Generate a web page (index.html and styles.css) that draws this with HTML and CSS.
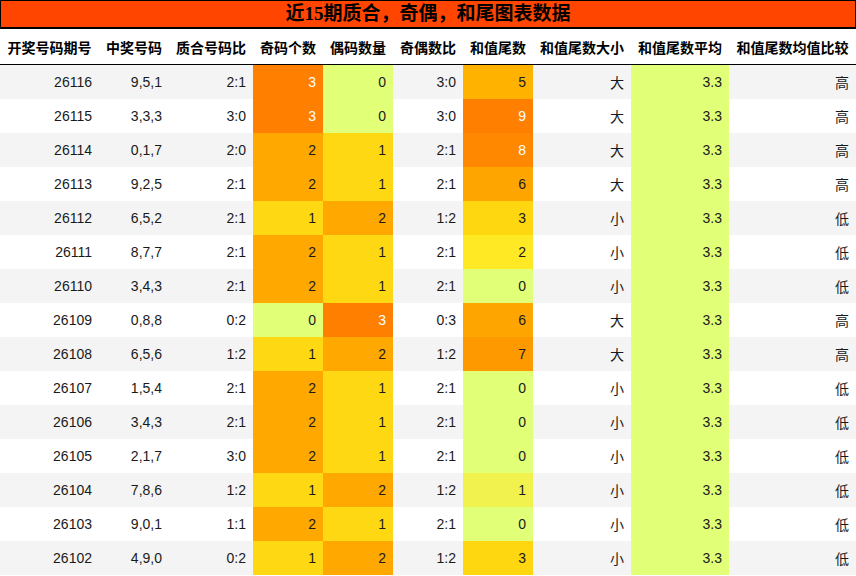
FILE: index.html
```html
<!DOCTYPE html>
<html lang="zh">
<head>
<meta charset="utf-8">
<title>近15期质合，奇偶，和尾图表数据</title>
<link rel="stylesheet" href="styles.css">
</head>
<body>
<div class="title">近15期质合，奇偶，和尾图表数据</div>
<table class="grid">
  <colgroup>
    <col class="w99"><col class="w70"><col class="w84"><col class="w70"><col class="w70"><col class="w70"><col class="w70"><col class="w98"><col class="w98"><col class="w127">
  </colgroup>
  <thead>
    <tr><th>开奖号码期号</th><th>中奖号码</th><th>质合号码比</th><th>奇码个数</th><th>偶码数量</th><th>奇偶数比</th><th>和值尾数</th><th>和值尾数大小</th><th>和值尾数平均</th><th>和值尾数均值比较</th></tr>
  </thead>
  <tbody>
    <tr><td>26116</td><td>9,5,1</td><td>2:1</td><td class="c3">3</td><td class="c0">0</td><td>3:0</td><td class="t5">5</td><td class="cj">大</td><td class="avg">3.3</td><td class="cj">高</td></tr>
    <tr><td>26115</td><td>3,3,3</td><td>3:0</td><td class="c3">3</td><td class="c0">0</td><td>3:0</td><td class="t9">9</td><td class="cj">大</td><td class="avg">3.3</td><td class="cj">高</td></tr>
    <tr><td>26114</td><td>0,1,7</td><td>2:0</td><td class="c2">2</td><td class="c1">1</td><td>2:1</td><td class="t8">8</td><td class="cj">大</td><td class="avg">3.3</td><td class="cj">高</td></tr>
    <tr><td>26113</td><td>9,2,5</td><td>2:1</td><td class="c2">2</td><td class="c1">1</td><td>2:1</td><td class="t6">6</td><td class="cj">大</td><td class="avg">3.3</td><td class="cj">高</td></tr>
    <tr><td>26112</td><td>6,5,2</td><td>2:1</td><td class="c1">1</td><td class="c2">2</td><td>1:2</td><td class="t3">3</td><td class="cj">小</td><td class="avg">3.3</td><td class="cj">低</td></tr>
    <tr><td>26111</td><td>8,7,7</td><td>2:1</td><td class="c2">2</td><td class="c1">1</td><td>2:1</td><td class="t2">2</td><td class="cj">小</td><td class="avg">3.3</td><td class="cj">低</td></tr>
    <tr><td>26110</td><td>3,4,3</td><td>2:1</td><td class="c2">2</td><td class="c1">1</td><td>2:1</td><td class="t0">0</td><td class="cj">小</td><td class="avg">3.3</td><td class="cj">低</td></tr>
    <tr><td>26109</td><td>0,8,8</td><td>0:2</td><td class="c0">0</td><td class="c3">3</td><td>0:3</td><td class="t6">6</td><td class="cj">大</td><td class="avg">3.3</td><td class="cj">高</td></tr>
    <tr><td>26108</td><td>6,5,6</td><td>1:2</td><td class="c1">1</td><td class="c2">2</td><td>1:2</td><td class="t7">7</td><td class="cj">大</td><td class="avg">3.3</td><td class="cj">高</td></tr>
    <tr><td>26107</td><td>1,5,4</td><td>2:1</td><td class="c2">2</td><td class="c1">1</td><td>2:1</td><td class="t0">0</td><td class="cj">小</td><td class="avg">3.3</td><td class="cj">低</td></tr>
    <tr><td>26106</td><td>3,4,3</td><td>2:1</td><td class="c2">2</td><td class="c1">1</td><td>2:1</td><td class="t0">0</td><td class="cj">小</td><td class="avg">3.3</td><td class="cj">低</td></tr>
    <tr><td>26105</td><td>2,1,7</td><td>3:0</td><td class="c2">2</td><td class="c1">1</td><td>2:1</td><td class="t0">0</td><td class="cj">小</td><td class="avg">3.3</td><td class="cj">低</td></tr>
    <tr><td>26104</td><td>7,8,6</td><td>1:2</td><td class="c1">1</td><td class="c2">2</td><td>1:2</td><td class="t1">1</td><td class="cj">小</td><td class="avg">3.3</td><td class="cj">低</td></tr>
    <tr><td>26103</td><td>9,0,1</td><td>1:1</td><td class="c2">2</td><td class="c1">1</td><td>2:1</td><td class="t0">0</td><td class="cj">小</td><td class="avg">3.3</td><td class="cj">低</td></tr>
    <tr><td>26102</td><td>4,9,0</td><td>0:2</td><td class="c1">1</td><td class="c2">2</td><td>1:2</td><td class="t3">3</td><td class="cj">小</td><td class="avg">3.3</td><td class="cj">低</td></tr>
  </tbody>
</table>
</body>
</html>
```
FILE: styles.css
```css
html, body {
  margin: 0;
  padding: 0;
  background: #fff;
}
body {
  width: 856px;
  font-family: "Liberation Sans", "Noto Sans CJK SC", sans-serif;
}
.title {
  box-sizing: border-box;
  height: 29px;
  border: 1px solid #000;
  border-bottom-width: 2px;
  background: #ff4500;
  color: #000;
  font-family: "Liberation Serif", "Noto Sans CJK SC", serif;
  font-weight: bold;
  font-size: 19px;
  line-height: 26px;
  text-align: center;
}
.grid {
  width: 856px;
  table-layout: fixed;
  border-collapse: collapse;
  border-spacing: 0;
}
.w99 { width: 99px; }
.w70 { width: 70px; }
.w84 { width: 84px; }
.w98 { width: 98px; }
.w127 { width: 127px; }
.grid th {
  height: 35px;
  padding: 0;
  font-family: "Noto Sans CJK SC", sans-serif;
  font-weight: bold;
  font-size: 14px;
  color: #000;
  text-align: center;
  white-space: nowrap;
  border-bottom: 1px solid #000;
}
.grid td {
  height: 34px;
  padding: 0 7px 0 0;
  font-size: 14px;
  color: #1a1a1a;
  text-align: right;
  vertical-align: middle;
  white-space: nowrap;
}
.grid tbody tr:nth-child(odd) { background: #f4f4f4; }
.grid tbody tr:nth-child(even) { background: #fff; }
.grid td.cj {
  font-family: "Noto Sans CJK SC", sans-serif;
  font-size: 14px;
}
.grid td.c0 { background: #e2ff78; }
.grid td.c1 { background: #ffd814; }
.grid td.c2 { background: #ffa800; }
.grid td.c3 { background: #ff8000; color: #fff; }
.grid td.t0 { background: #e2ff78; }
.grid td.t1 { background: #f2f24e; }
.grid td.t2 { background: #ffe824; }
.grid td.t3 { background: #ffd710; }
.grid td.t5 { background: #ffb300; }
.grid td.t6 { background: #ffa500; }
.grid td.t7 { background: #ff9900; }
.grid td.t8 { background: #ff8800; color: #fff; }
.grid td.t9 { background: #ff8000; color: #fff; }
.grid td.avg { background: #e2ff78; }
```
